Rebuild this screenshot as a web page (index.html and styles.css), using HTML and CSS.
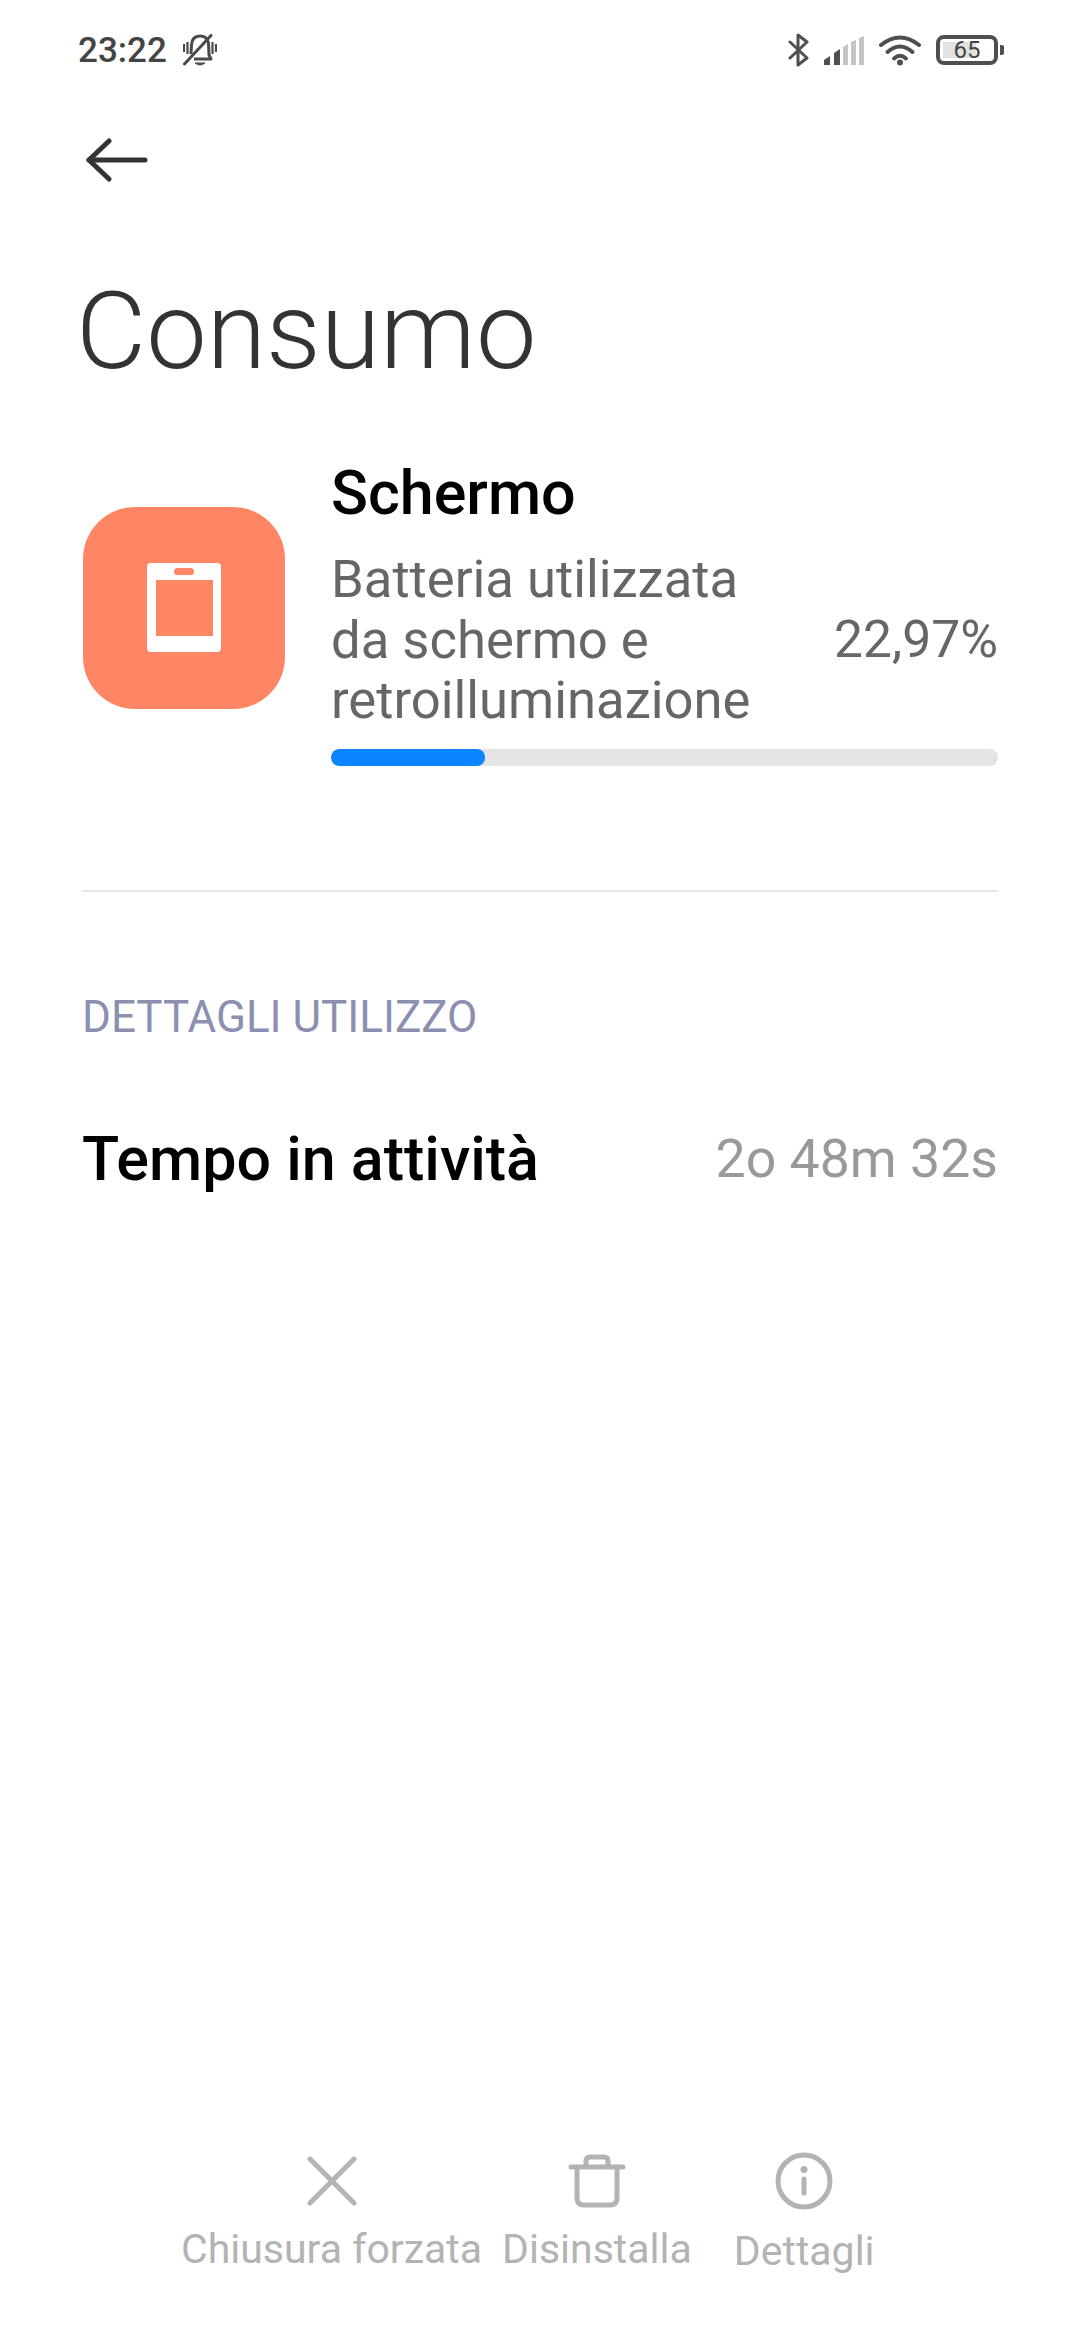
FILE: index.html
```html
<!DOCTYPE html>
<html lang="it">

<head>
    <meta charset="UTF-8">
    <meta name="viewport" content="width=device-width, initial-scale=1.0">
    <title>Consumo</title>
    <link rel="stylesheet" href="styles.css">
</head>

<body>

    <!-- Status bar -->
    <div class="status-bar">
        <div class="status-left">
            <span class="clock">23:22</span>
            <svg class="bell" width="34" height="33" viewBox="0 0 34 33" fill="none" stroke="#4a4a4a" stroke-width="3">
                <path d="M8 20 L8.500 11 Q9 2 17 2 Q24 2 25.500 9 L26 21 L28 25 H11" stroke-linejoin="round"/>
                <path d="M12 29 H22 Q17 33 12 29 Z" fill="#4a4a4a" stroke-width="1"/>
                <path d="M1 10 V18 M4.500 8 V20 M29.500 8 V20 M33 10 V18" stroke-width="2.200"/>
                <path d="M1.500 30 L28 1.500" stroke-linecap="round"/>
            </svg>
        </div>
        <div class="status-right">
            <svg width="21" height="34" viewBox="0 0 21 34" fill="none" stroke="#4f4f4f" stroke-width="3" stroke-linecap="round" stroke-linejoin="round">
                <path d="M2 9 L19 25 L10 32 V2 L19 9 L2 25"/>
            </svg>
            <svg class="signal" width="40" height="29" viewBox="0 0 40 29">
                <path d="M0 29 V24 L6 20 V29 Z" fill="#4f4f4f"/>
                <path d="M10 29 V17 L16 13 V29 Z" fill="#4f4f4f"/>
                <path d="M19 29 V11 L24 8 V29 Z" fill="#c4c4c4"/>
                <path d="M27 29 V6 L32 4 V29 Z" fill="#c4c4c4"/>
                <path d="M35 29 V2 L40 0 V29 Z" fill="#c4c4c4"/>
            </svg>
            <svg class="wifi" width="42" height="31" viewBox="0 0 42 31" fill="none" stroke="#4f4f4f" stroke-width="4" stroke-linecap="round">
                <path d="M2 10 Q21 -5 40 10"/>
                <path d="M8.500 17 Q21 6 33.500 17"/>
                <path d="M15 23.500 Q21 18 27 23.500" />
                <circle cx="21" cy="27.500" r="3" fill="#4f4f4f" stroke="none"/>
            </svg>
            <div class="battery">
                <div class="battery-body">
                    <div class="battery-fill"></div>
                    <span class="battery-text">65</span>
                </div>
                <div class="battery-tip"></div>
            </div>
        </div>
    </div>

    <!-- Back arrow -->
    <div class="toolbar">
        <svg width="62" height="44" viewBox="0 0 62 44" fill="none" stroke="#333" stroke-width="5" stroke-linecap="round" stroke-linejoin="round">
            <path d="M23 3 L3 22 L23 41"/>
            <path d="M3 22 H59"/>
        </svg>
    </div>

    <h1 class="title">Consumo</h1>

    <!-- Usage summary -->
    <div class="summary">
        <div class="app-icon">
            <svg width="74" height="90" viewBox="0 0 74 90">
                <path d="M4 0 H70 Q74 0 74 4 V85 Q74 89 70 89 H4 Q0 89 0 85 V4 Q0 0 4 0 Z" fill="#fff"/>
                <rect x="9" y="17" width="57" height="56" fill="#ff8664"/>
                <rect x="27" y="5" width="20" height="7" rx="3.500" fill="#ff8664"/>
            </svg>
        </div>
        <div class="summary-body">
            <div class="summary-name">Schermo</div>
            <div class="summary-row">
                <div class="summary-desc">Batteria utilizzata<br>da schermo e<br>retroilluminazione</div>
                <div class="summary-percent">22,97%</div>
            </div>
            <div class="progress-bar">
                <div class="progress-bar-fill" style="width: 23.1%"></div>
            </div>
        </div>
    </div>

    <div class="divider"></div>

    <div class="section-title">DETTAGLI UTILIZZO</div>

    <div class="detail-row">
        <span class="detail-label">Tempo in attività</span>
        <span class="detail-value">2o 48m 32s</span>
    </div>

    <!-- Bottom actions -->
    <div class="actions">
        <div class="action">
            <div class="action-icon">
                <svg width="52" height="50" viewBox="0 0 52 50" fill="none" stroke="#b3b3b3" stroke-width="5" stroke-linecap="round">
                    <path d="M4 3 L48 47"/>
                    <path d="M48 3 L4 47"/>
                </svg>
            </div>
            <span class="action-label">Chiusura forzata</span>
        </div>
        <div class="action action-delete">
            <div class="action-icon">
                <svg width="58" height="54" viewBox="0 0 58 54" fill="none" stroke="#b3b3b3" stroke-width="5" stroke-linecap="round" stroke-linejoin="round">
                    <path d="M3 13 H55"/>
                    <path d="M18 12 V7 Q18 3 22 3 H36 Q40 3 40 7 V12"/>
                    <path d="M9 13 V44 Q9 51 16 51 H42 Q49 51 49 44 V13"/>
                </svg>
            </div>
            <span class="action-label">Disinstalla</span>
        </div>
        <div class="action action-info">
            <div class="action-icon">
                <svg width="58" height="58" viewBox="0 0 58 58" fill="none" stroke="#b3b3b3" stroke-width="5" stroke-linecap="round">
                    <circle cx="29" cy="29" r="26"/>
                    <path d="M29 27 V41"/>
                    <circle cx="29" cy="17.500" r="3.500" fill="#b3b3b3" stroke="none"/>
                </svg>
            </div>
            <span class="action-label">Dettagli</span>
        </div>
    </div>

</body>

</html>
```

FILE: styles.css
```css
* {
    margin: 0;
    padding: 0;
    box-sizing: border-box;
}

body {
    width: 1080px;
    height: 2340px;
    background-color: #fff;
    font-family: Roboto, sans-serif;
    display: flex;
    flex-direction: column;
    padding: 0 82px;
}

/* Status bar */
.status-bar {
    height: 100px;
    margin: 0 -82px 0 -4px;
    padding-right: 76px;
    display: flex;
    justify-content: space-between;
    align-items: center;
}

.status-left {
    display: flex;
    align-items: center;
    gap: 16px;
}

.clock {
    font-size: 35px;
    font-weight: 500;
    color: #444;
}

.status-right {
    display: flex;
    align-items: center;
    gap: 15px;
}

.battery {
    display: flex;
    align-items: center;
    gap: 2px;
}

.battery-body {
    width: 62px;
    height: 30px;
    border: 4px solid #4f4f4f;
    border-radius: 8px;
    position: relative;
    display: flex;
    align-items: center;
    justify-content: center;
}

.battery-fill {
    position: absolute;
    left: 3px;
    top: 3px;
    bottom: 3px;
    width: 62%;
    background-color: #e2e2e2;
}

.battery-text {
    position: relative;
    font-size: 24px;
    color: #444;
}

.battery-tip {
    width: 4px;
    height: 10px;
    background-color: #4f4f4f;
    border-radius: 0 2px 2px 0;
}

.toolbar {
    height: 44px;
    margin-top: 38px;
    margin-left: 4px;
}

.title {
    font-size: 108px;
    font-weight: 300;
    color: #333;
    margin-top: 85px;
    margin-left: -6px;
    line-height: 128px;
}

/* Usage summary */
.summary {
    display: flex;
    margin-top: 63px;
}

.app-icon {
    width: 202px;
    height: 202px;
    margin-top: 49px;
    margin-left: 1px;
    flex-shrink: 0;
    background-color: #ff8664;
    border-radius: 52px;
    display: flex;
    align-items: center;
    justify-content: center;
}

.summary-body {
    flex: 1;
    margin-left: 46px;
}

.summary-name {
    font-size: 61px;
    font-weight: 500;
    color: #000;
    line-height: 70px;
}

.summary-row {
    display: flex;
    justify-content: space-between;
    align-items: center;
    margin-top: 21px;
}

.summary-desc {
    font-size: 52.600px;
    line-height: 60.500px;
    color: #666;
}

.summary-percent {
    font-size: 51.600px;
    color: #666;
}

.progress-bar {
    height: 17px;
    margin-top: 18px;
    background-color: #e4e4e4;
    border-radius: 8px;
    overflow: hidden;
}

.progress-bar-fill {
    height: 100%;
    background-color: #0d84ff;
    border-radius: 8px;
}

.divider {
    height: 2px;
    background-color: #e6e6e6;
    margin-top: 124px;
}

.section-title {
    font-size: 44px;
    color: #8c90b0;
    margin-top: 99px;
    line-height: 52px;
}

.detail-row {
    display: flex;
    justify-content: space-between;
    align-items: center;
    margin-top: 80px;
}

.detail-label {
    font-size: 61px;
    font-weight: 500;
    color: #000;
}

.detail-value {
    font-size: 53.600px;
    color: #999;
}

/* Bottom actions */
.actions {
    margin-top: auto;
    margin-bottom: 65px;
    margin-left: 99px;
    display: flex;
    color: #b3b3b3;
    font-size: 41px;
}

.action {
    display: flex;
    flex-direction: column;
    align-items: center;
}

.action-icon {
    height: 60px;
    display: flex;
    align-items: center;
}

.action-label {
    margin-top: 14px;
    line-height: 48px;
}

.action-delete {
    margin-left: 20px;
}

.action-info {
    margin-left: 42px;
}

.action-info .action-label {
    margin-top: 16px;
}
```
